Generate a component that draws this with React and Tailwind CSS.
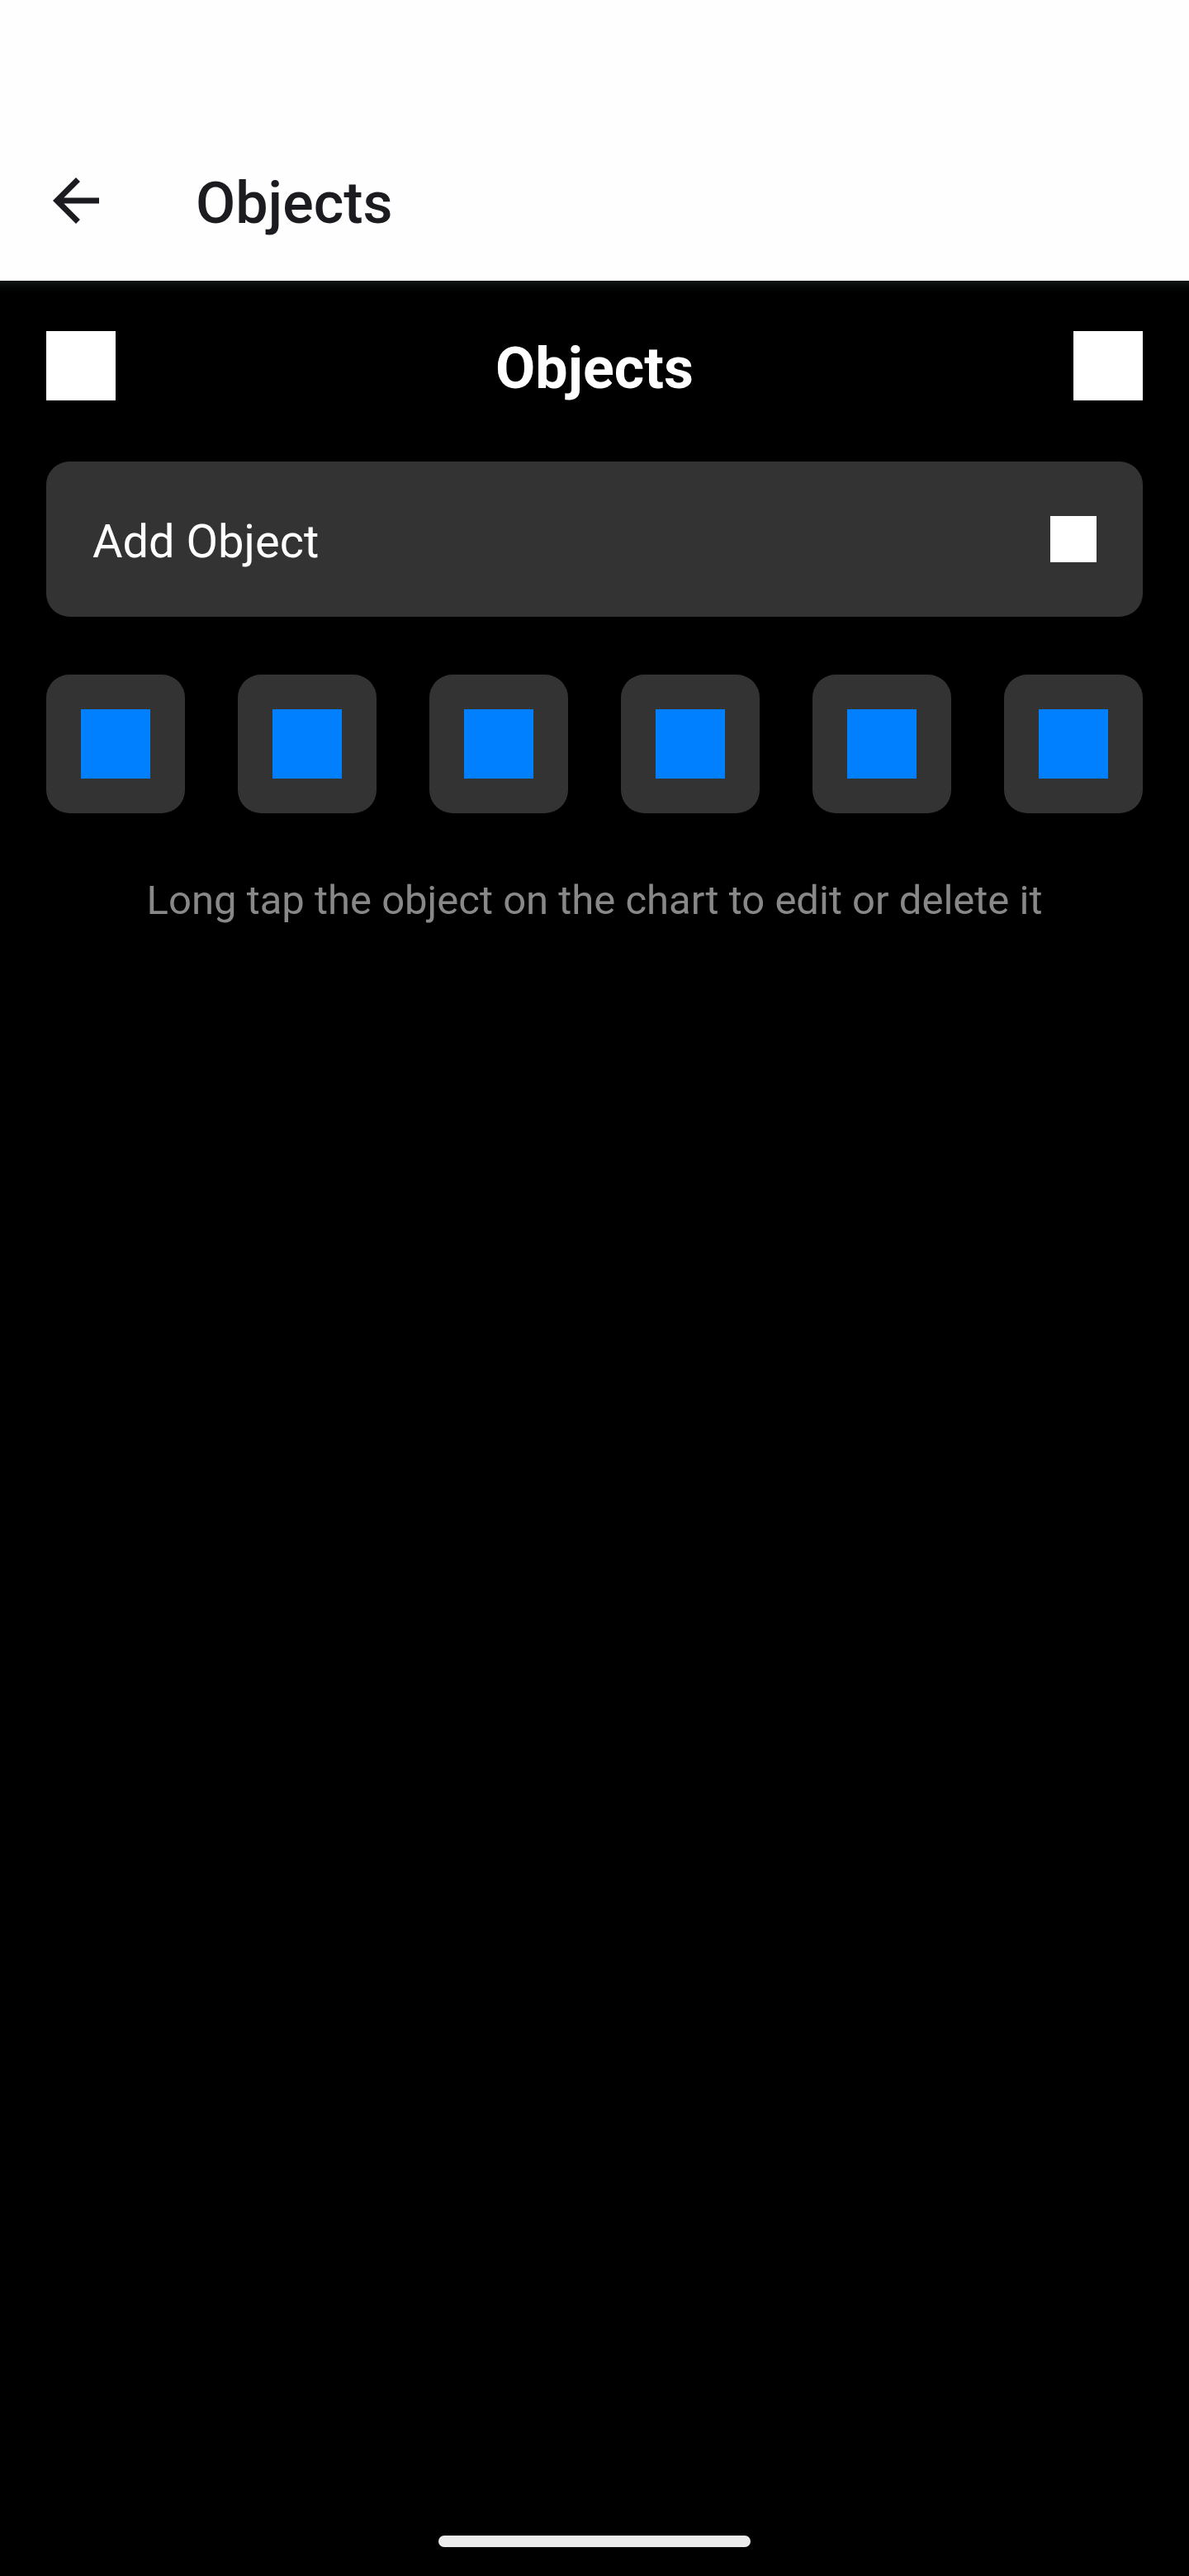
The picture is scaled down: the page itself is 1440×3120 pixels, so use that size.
const objects = ["Object 1", "Object 2", "Object 3", "Object 4", "Object 5", "Object 6"];

export default function App() {
  return (
    <div className="flex min-h-screen flex-col bg-black font-[Roboto,sans-serif]">
      <header className="flex items-center bg-[#fefefe] px-[50px] pt-[145px] text-[#1c1b1f]">
        <button type="button" aria-label="Go back" className="mr-[103px] size-[84px] shrink-0">
          <svg viewBox="0 0 24 24" fill="currentColor" className="size-full">
            <path d="M20 11H7.83l5.59-5.59L12 4l-8 8 8 8 1.41-1.41L7.83 13H20v-2z" />
          </svg>
        </button>
        <h1 className="pt-[62px] pb-[55px] text-[70px] leading-[78px] font-medium">Objects</h1>
      </header>

      <main className="flex grow flex-col bg-linear-to-b from-[#141816] to-black to-[20px] px-14 pt-[61px]">
        <div className="flex items-center justify-between">
          <button type="button" aria-label="Close" className="size-[84px] bg-white" />
          <h2 className="pt-1.5 text-[70px] leading-[78px] font-bold text-white">Objects</h2>
          <button type="button" aria-label="Confirm" className="size-[84px] bg-white" />
        </div>

        <button
          type="button"
          className="mt-[74px] flex items-center justify-between rounded-[28px] bg-[#333333] p-14 text-white"
        >
          <span className="pt-1.5 text-[56px] leading-[70px]">Add Object</span>
          <span className="size-14 bg-white" />
        </button>

        <ul className="mt-[70px] flex justify-between">
          {objects.map((name) => (
            <li key={name} className="flex">
              <button
                type="button"
                aria-label={name}
                className="flex size-[168px] items-center justify-center rounded-[28px] bg-[#333333]"
              >
                <span className="size-[84px] bg-[#007fff]" />
              </button>
            </li>
          ))}
        </ul>

        <p className="mt-[70px] text-center text-[49px] leading-[72px] text-[#888888]">
          Long tap the object on the chart to edit or delete it
        </p>
      </main>

      <footer className="flex justify-center pb-[35px]">
        <div className="h-3.5 w-[378px] rounded-full bg-[#ebebeb]" />
      </footer>
    </div>
  );
}
